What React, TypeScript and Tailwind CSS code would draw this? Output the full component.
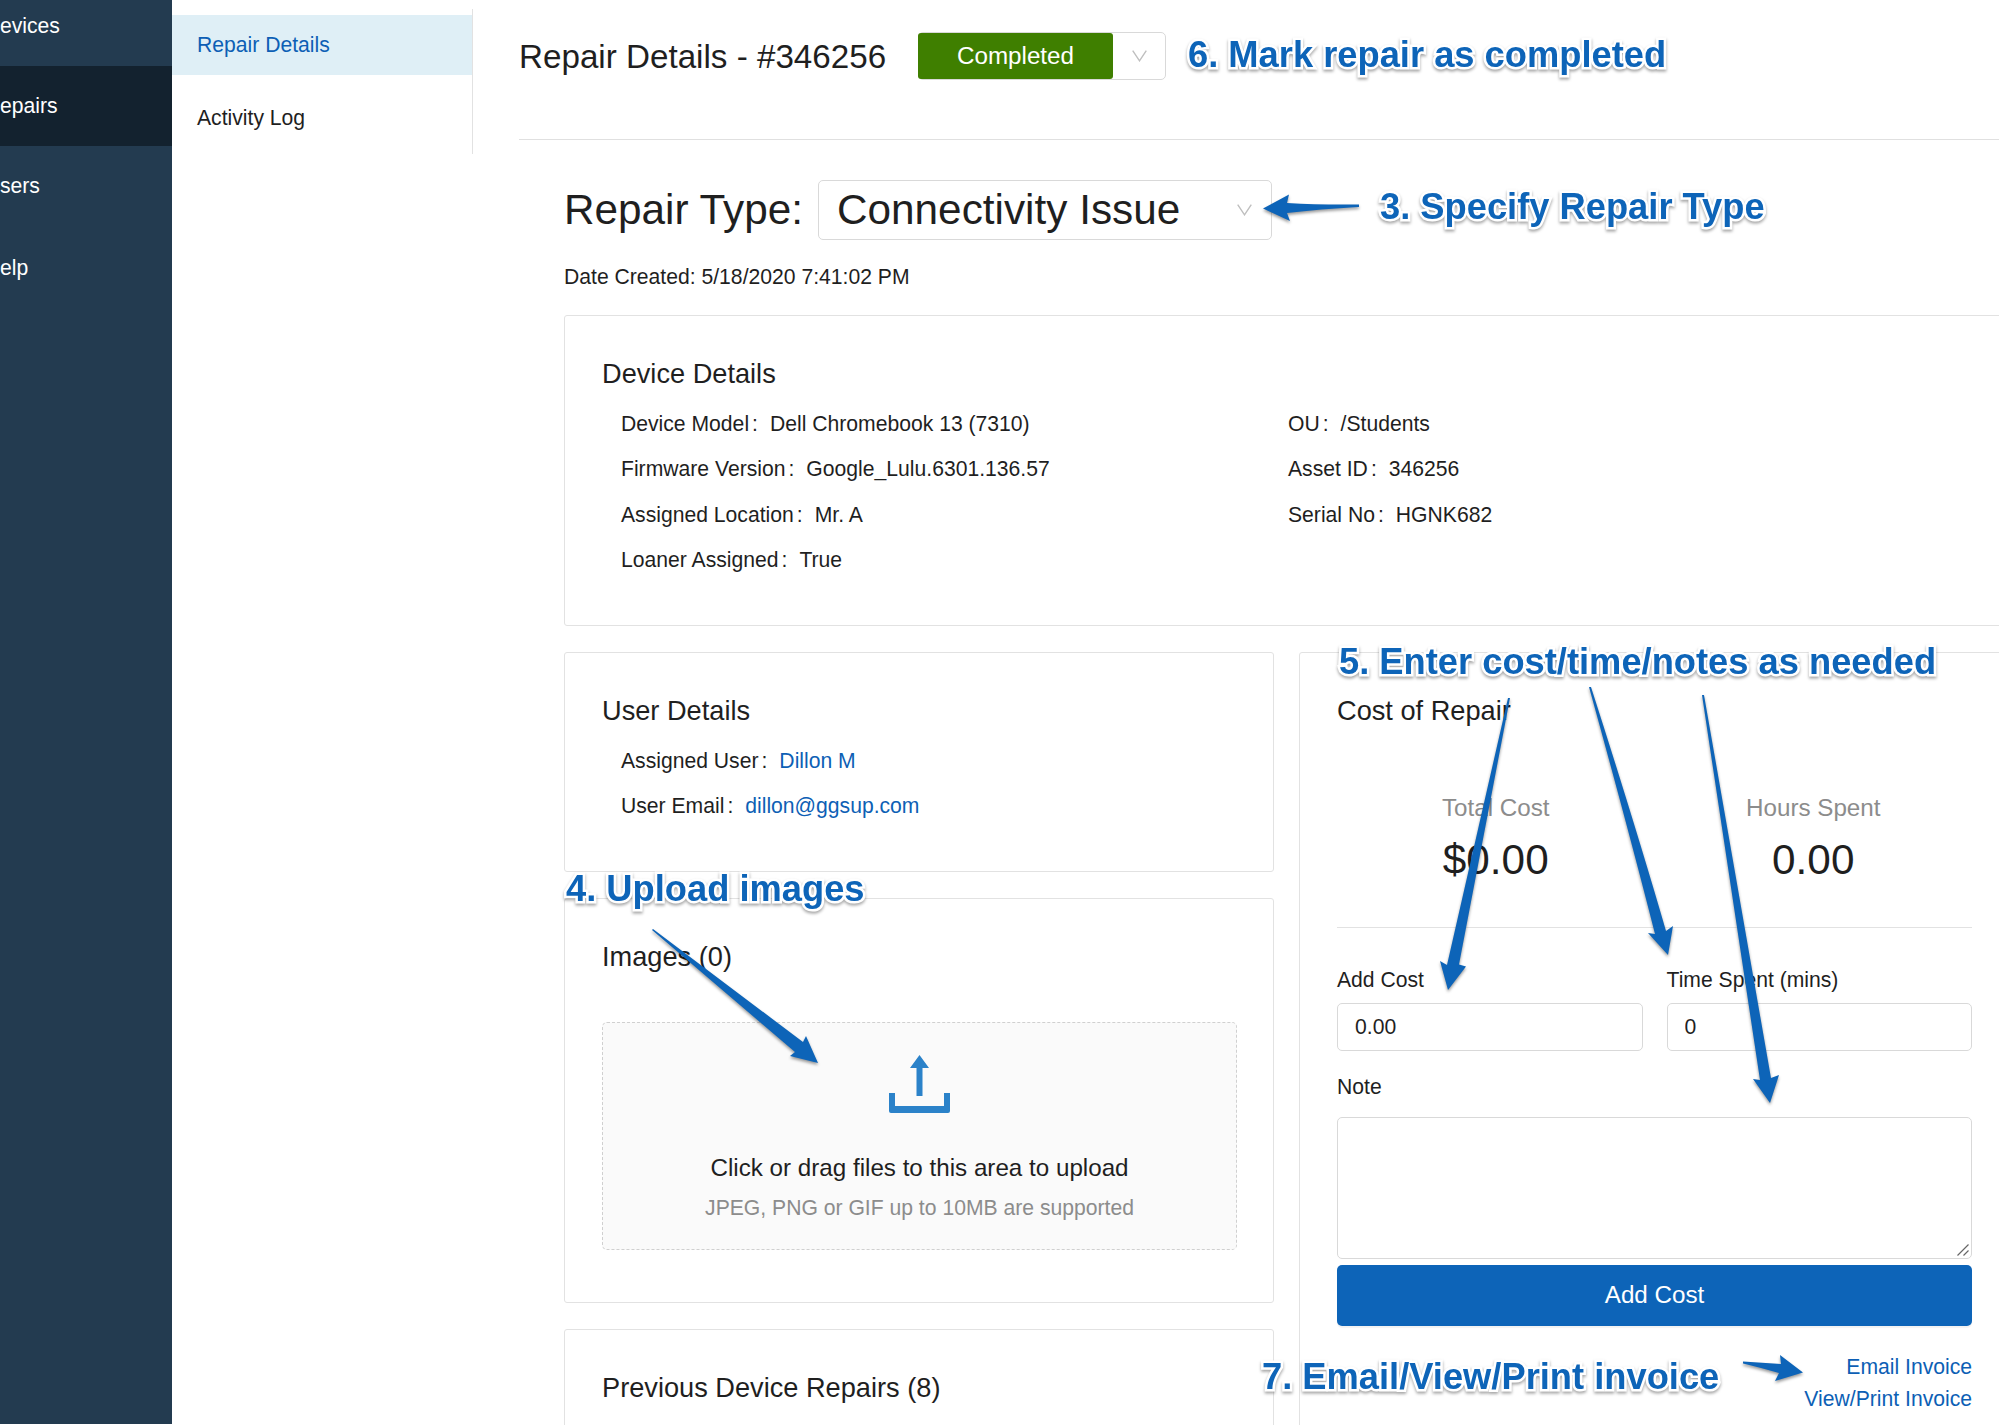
import type { ReactNode } from 'react';

const deviceLeft = [
  ['Device Model', 'Dell Chromebook 13 (7310)'],
  ['Firmware Version', 'Google_Lulu.6301.136.57'],
  ['Assigned Location', 'Mr. A'],
  ['Loaner Assigned', 'True'],
];

const deviceRight = [
  ['OU', '/Students'],
  ['Asset ID', '346256'],
  ['Serial No', 'HGNK682'],
];

const user = [
  ['Assigned User', 'Dillon M'],
  ['User Email', 'dillon@ggsup.com'],
];

interface DetailListProps {
  items: string[][];
  link?: boolean;
}

function DetailList({ items, link }: DetailListProps) {
  return (
    <dl className="flex flex-col">
      {items.map(([label, value]) => (
        <div key={label} className="flex h-[45.3px] items-start leading-[32px]">
          <dt className="after:ml-[3px] after:mr-3 after:content-[':']">{label}</dt>
          <dd className={link ? 'text-[#0d5fb5]' : ''}>{value}</dd>
        </div>
      ))}
    </dl>
  );
}

function Card({ title, className, children }: { title: string; className: string; children?: ReactNode }) {
  return (
    <section className={`rounded-[3px] border border-[#e2e2e2] pl-[37px] pt-[37px] ${className}`}>
      <h3 className="text-[27.2px] leading-[42px]">{title}</h3>
      {children}
    </section>
  );
}

function Chevron() {
  return (
    <svg className="h-3 w-[15px]" viewBox="0 0 15 12" fill="none" stroke="#bfbfbf" strokeWidth="1.4">
      <path d="M.7.7 7.5 10.8 14.3.7" />
    </svg>
  );
}

function Note({ className, children }: { className: string; children: ReactNode }) {
  return (
    <div
      className={`absolute whitespace-nowrap text-[36.3px] font-bold leading-[40px] text-[#0d64b8] [paint-order:stroke_fill] [-webkit-text-stroke:5px_white] [filter:drop-shadow(0_2px_1.5px_rgba(0,0,0,0.35))] ${className}`}
    >
      {children}
    </div>
  );
}

function Arrows() {
  return (
    <svg
      className="pointer-events-none absolute left-0 top-0 h-[1425px] w-[1999px] [filter:drop-shadow(0_2px_1.5px_rgba(0,0,0,0.4))]"
      viewBox="0 0 1999 1425"
      fill="#0d64b8"
    >
      <path d="M1263 208.500 1289 194.500 1287 203Q1320 205 1359 204.500V207Q1320 209 1287 213L1290 221Z" />
      <path d="M653 929 803 1042 806 1036 818 1063 790 1056 795 1052 652 930Z" />
      <path d="M1508 698H1510L1459 964.500 1466 966.500 1448 990 1440 961 1447 965Z" />
      <path d="M1589 687H1591Q1635 824 1666 931L1673 926 1668 955 1648 933 1655 934Q1627 824 1589 687Z" />
      <path d="M1702 695H1704L1771 1078 1779 1075 1770 1103 1753 1079 1760 1080Z" />
      <path d="M1743 1361.500 1781 1364 1780 1355 1803 1372.500 1775 1381 1779 1373Q1762 1368 1743 1363.500Z" />
    </svg>
  );
}

export default function App() {
  return (
    <div className="relative flex h-[1425px] w-[1999px] overflow-hidden bg-white font-['Liberation_Sans',Arial,sans-serif] text-[21.15px] text-[#1f1f1f]">
      <nav className="h-[1424px] w-[172px] shrink-0 bg-[#233b50] text-white">
        <div className="flex h-[66px] items-center pb-[14px]">evices</div>
        <div className="flex h-20 items-center bg-[#13222f]">epairs</div>
        <div className="flex h-20 items-center">sers</div>
        <div className="flex h-20 items-center pt-[4px]">elp</div>
      </nav>

      <aside className="mt-[9px] h-[145px] w-[301px] shrink-0 border-r border-[#e2e2e2] pt-[6px]">
        <div className="flex h-[60px] items-center bg-[#dfeff6] pl-[25px] text-[#0d5fb5]">Repair Details</div>
        <div className="mt-3 flex h-[61px] items-center pl-[25px]">Activity Log</div>
      </aside>

      <main className="ml-[46px] w-[1517px] shrink-0">
        <header className="flex h-[140px] items-start border-b border-[#e0e0e0] pt-8">
          <h1 className="w-[399px] pt-px text-[33.2px] leading-[48px]">Repair Details - #346256</h1>
          <div className="flex h-12 w-[248px] rounded-[5px] border border-[#d9d9d9]">
            <div className="-ml-px flex w-[195px] items-center justify-center rounded-[3px] bg-[#3f7f00] pt-px text-[24.2px] text-white">
              Completed
            </div>
            <div className="flex flex-1 items-center justify-center">
              <Chevron />
            </div>
          </div>
        </header>

        <div className="pl-[45px]">
          <div className="mt-[39px] flex h-[61px] items-center text-[42.3px]">
            <div className="w-[254px]">Repair Type:</div>
            <div className="flex h-[60px] w-[454px] items-center justify-between rounded-[5px] border border-[#d9d9d9] pl-[18px] pr-[19px]">
              Connectivity Issue
              <Chevron />
            </div>
          </div>
          <p className="mt-[21px] h-[54px] leading-[32px]">Date Created: 5/18/2020 7:41:02 PM</p>

          <Card title="Device Details" className="h-[311px] w-[1500px]">
            <div className="mt-[13px] flex pl-[19px]">
              <div className="w-[667px]">
                <DetailList items={deviceLeft} />
              </div>
              <DetailList items={deviceRight} />
            </div>
          </Card>

          <div className="mt-[26px] flex gap-[25px]">
            <div className="flex w-[710px] flex-col gap-[26px]">
              <Card title="User Details" className="h-[220px]">
                <div className="mt-[13px] pl-[19px]">
                  <DetailList items={user} link />
                </div>
              </Card>

              <Card title="Images (0)" className="h-[405px] pr-[36px]">
                <div className="mt-[44px] flex h-[228px] flex-col items-center rounded-[5px] border border-dashed border-[#d0d0d0] bg-[#fafafa]">
                  <svg className="mt-8 h-[58px] w-[61px]" viewBox="0 0 61 58" fill="#2b82c9">
                    <path d="M30.500 0 40 13H33.500V41H27.500V13H21Z" />
                    <path d="M0 38H6V51H55V38H61V56Q61 58 59 58H2Q0 58 0 56Z" />
                  </svg>
                  <p className="mt-[37px] text-[24.2px] leading-[36px]">Click or drag files to this area to upload</p>
                  <p className="mt-[6px] leading-[32px] text-[#8c8c8c]">JPEG, PNG or GIF up to 10MB are supported</p>
                </div>
              </Card>

              <Card title="Previous Device Repairs (8)" className="h-[200px]" />
            </div>

            <Card title="Cost of Repair" className="h-[900px] w-[711px] pr-[37px]">
              <div className="mt-[58px] flex h-[138px] border-b border-[#e2e2e2] text-center">
                <div className="w-1/2">
                  <p className="text-[24.2px] leading-[36px] text-[#8c8c8c]">Total Cost</p>
                  <p className="mt-[6px] text-[42.3px] leading-[56px]">$0.00</p>
                </div>
                <div className="w-1/2">
                  <p className="text-[24.2px] leading-[36px] text-[#8c8c8c]">Hours Spent</p>
                  <p className="mt-[6px] text-[42.3px] leading-[56px]">0.00</p>
                </div>
              </div>
              <div className="mt-[36px] flex gap-6">
                <label className="flex-1 leading-[32px]">
                  Add Cost
                  <input
                    className="mt-[7px] block h-12 w-full rounded-[5px] border border-[#d9d9d9] px-[17px]"
                    defaultValue="0.00"
                  />
                </label>
                <label className="flex-1 leading-[32px]">
                  Time Spent (mins)
                  <input
                    className="mt-[7px] block h-12 w-full rounded-[5px] border border-[#d9d9d9] px-[17px]"
                    defaultValue="0"
                  />
                </label>
              </div>
              <p className="mt-5 leading-[32px]">Note</p>
              <div className="mt-[14px] flex h-[142px] items-end justify-end rounded-[5px] border border-[#d9d9d9] p-[2px]">
                <svg className="h-3 w-3" viewBox="0 0 12 12" stroke="#666" strokeWidth="1.2">
                  <path d="M.5 11.500 11.500.5M6.500 11.500l5-5" />
                </svg>
              </div>
              <button className="mt-[6px] h-[61px] w-full rounded-[5px] bg-[#0d64b8] text-[24.2px] text-white shadow-[0_2px_1px_rgba(0,0,0,0.05)]">
                Add Cost
              </button>
              <div className="mt-[25px] flex flex-col items-end leading-[32px] text-[#0d5fb5]">
                <a>Email Invoice</a>
                <a>View/Print Invoice</a>
              </div>
            </Card>
          </div>
        </div>
      </main>

      <Arrows />
      <Note className="left-[1188px] top-[35px]">6. Mark repair as completed</Note>
      <Note className="left-[1380px] top-[187px]">3. Specify Repair Type</Note>
      <Note className="left-[566px] top-[869px]">4. Upload images</Note>
      <Note className="left-[1339px] top-[642px]">5. Enter cost/time/notes as needed</Note>
      <Note className="left-[1262px] top-[1357px]">7. Email/View/Print invoice</Note>
    </div>
  );
}
